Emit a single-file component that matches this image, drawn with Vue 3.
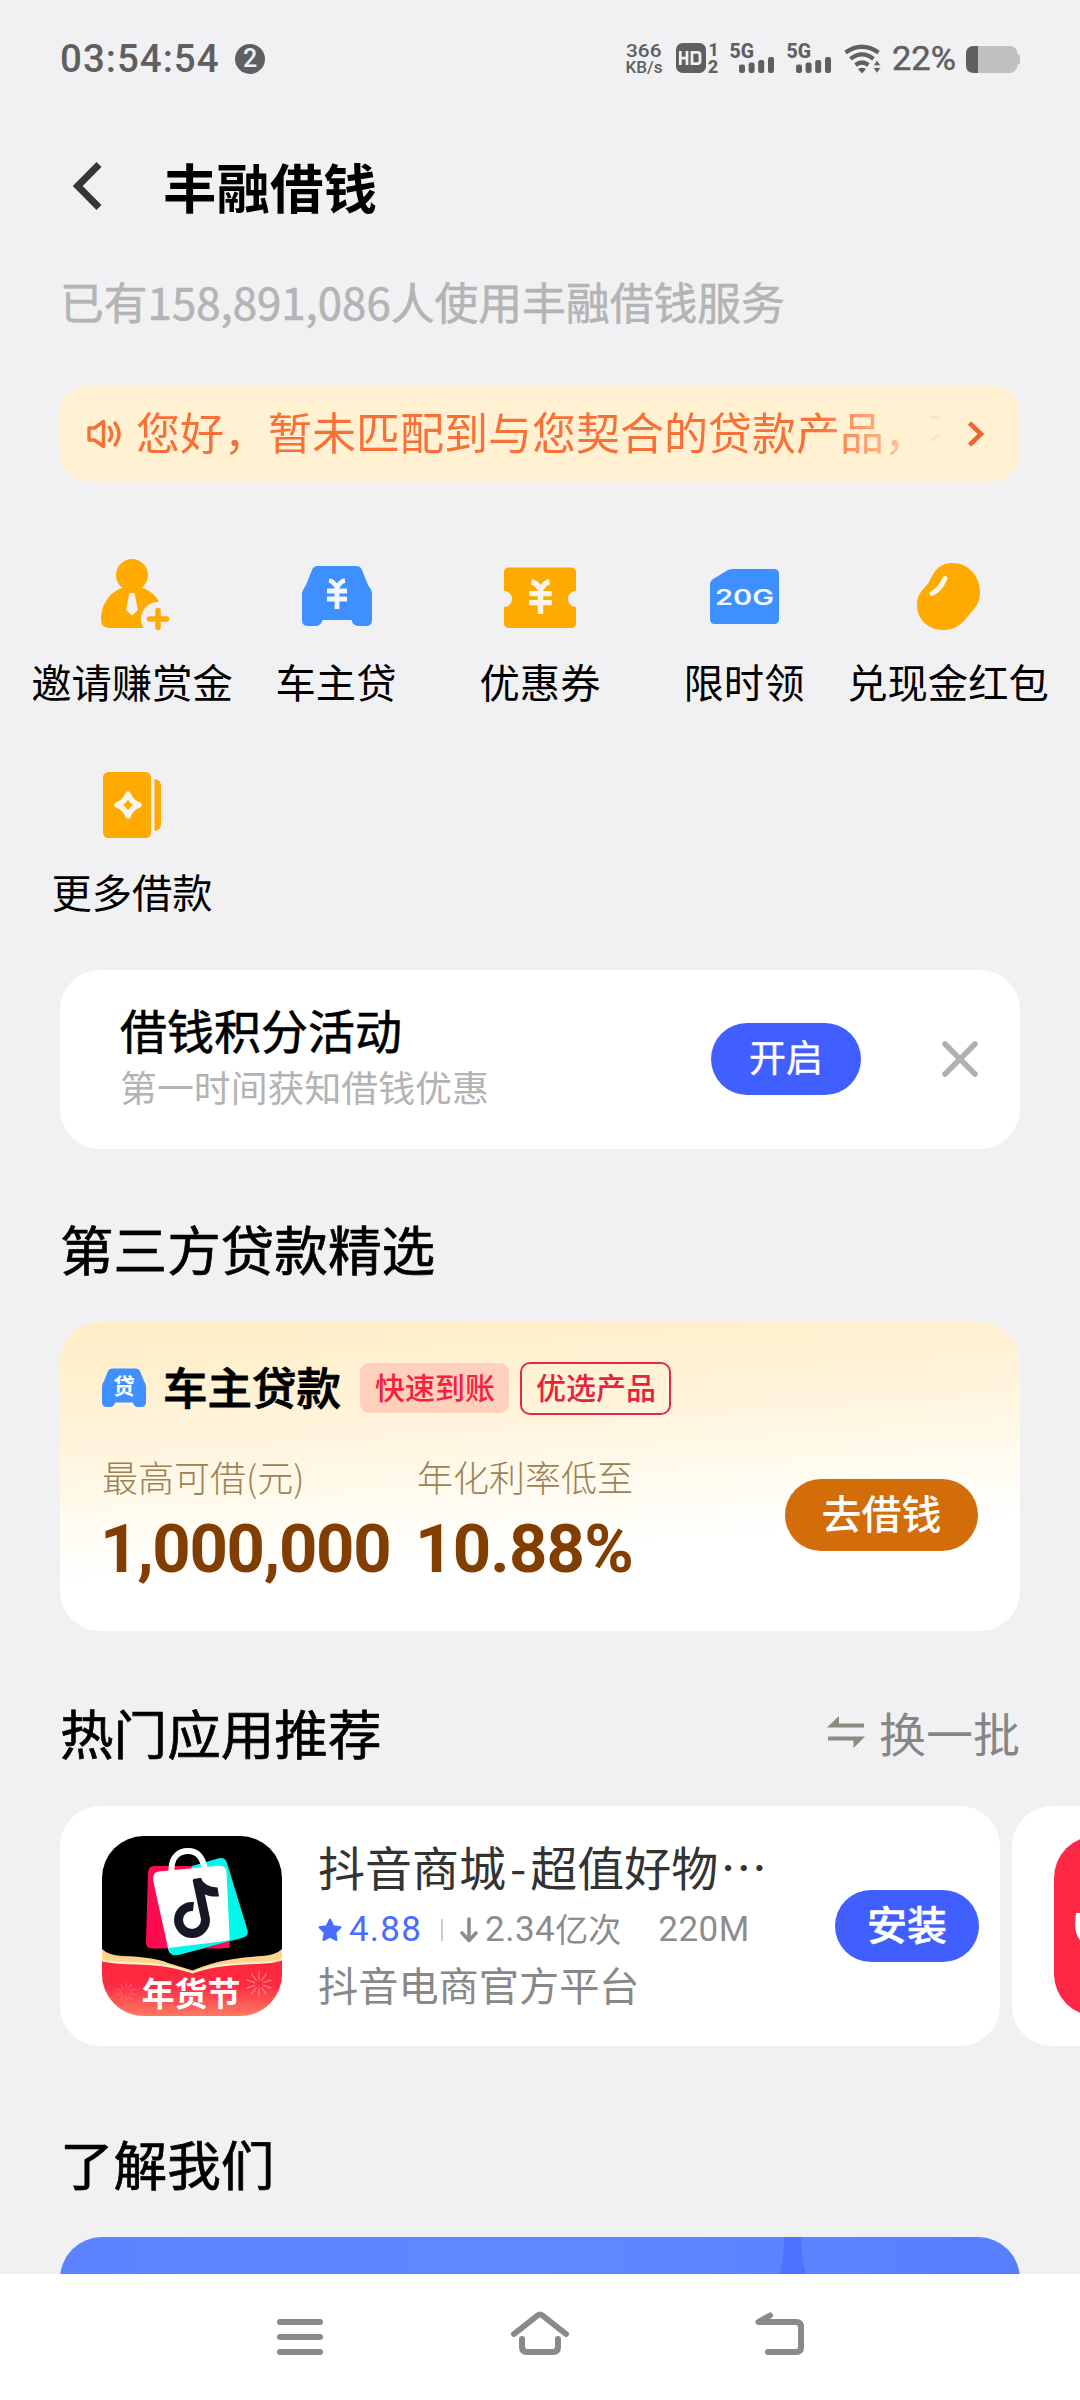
<script setup>
const yen = 'M-8 -13.5 C-5 -13 -2 -10 0 -6.5 C2 -10 5 -13 8 -13.5 M-10 -3 H10 M-10 5 H10 M0 -6 V15'
const shortcuts = [
  { icon: 'invite', label: '邀请赚赏金' },
  { icon: 'car', label: '车主贷' },
  { icon: 'ticket', label: '优惠券' },
  { icon: 'sim', label: '限时领' },
  { icon: 'bean', label: '兑现金红包' },
  { icon: 'book', label: '更多借款' },
]
const signalOffsets = [0, 57]
const rays = [0, 36, 72, 108, 144, 180, 216, 252, 288, 324]
</script>

<template>
  <div class="screen">
    <main class="content">
      <div class="status">
        <span class="time">03:54:54</span>
        <span class="count">2</span>
        <svg class="status-icons" width="396" height="60" viewBox="624 28 396 60" fill="#5f5f61">
          <g font-family="Roboto, sans-serif" font-weight="500">
            <text x="626" y="57.2" font-size="18.5" textLength="35.5" lengthAdjust="spacingAndGlyphs">366</text>
            <text x="625.5" y="73.2" font-size="16.5" textLength="37" lengthAdjust="spacingAndGlyphs">KB/s</text>
          </g>
          <rect x="676" y="43" width="30" height="30" rx="6.5" />
          <g fill="none" stroke="#f1f1f3" stroke-width="2.8">
            <path d="M680.3 51 V65 M687 51 V65 M680 58.2 H687" />
            <path d="M692 52.3 H697.5 Q700 52.3 700 55 V61 Q700 63.7 697.5 63.7 H692 Z" />
          </g>
          <g font-family="Roboto, sans-serif" font-weight="800">
            <text x="708.5" y="55.5" font-size="17.5">1</text>
            <text x="707.8" y="73" font-size="17.5" textLength="10.5" lengthAdjust="spacingAndGlyphs">2</text>
          </g>
          <g v-for="x in signalOffsets" :key="x" :transform="`translate(${x} 0)`">
            <text x="729.5" y="57.8" font-size="20.5" font-family="Roboto, sans-serif" font-weight="800" textLength="24.5" lengthAdjust="spacingAndGlyphs">5G</text>
            <rect x="739" y="64.5" width="6" height="8.5" rx="2.2" />
            <rect x="748.6" y="62.5" width="6" height="10.5" rx="2.2" />
            <rect x="758.2" y="60" width="6" height="13" rx="2.2" />
            <rect x="768" y="57" width="6" height="16" rx="2.2" />
          </g>
          <g fill="none" stroke="#5f5f61" stroke-width="4.2">
            <path d="M845.5 52.5 Q862 41 878.5 52.5" />
            <path d="M850.5 58.8 Q862 50 873.5 58.8" />
            <path d="M855.5 65 Q862 60 868.5 65" />
          </g>
          <path d="M858 69 Q862 66.5 866 69 L862 73.5 Z" />
          <path d="M877 60 L880.8 65.8 H873.2 Z M877 73.5 L880.8 67.5 H873.2 Z" stroke="#f1f1f3" stroke-width=".8" />
          <text x="892" y="70.3" font-size="32.5" font-family="Roboto, sans-serif" font-weight="400" stroke="#5f5f61" stroke-width=".5" textLength="64" lengthAdjust="spacingAndGlyphs">22%</text>
          <rect x="966" y="46" width="51.5" height="27" rx="8" fill="#c0c0c2" />
          <path d="M1017 54 Q1020 54.5 1020 57 V62 Q1020 64.5 1017 65 Z" fill="#c0c0c2" />
          <path d="M978 46 H974 Q966 46 966 54 V65 Q966 73 974 73 H978 Z" />
        </svg>
      </div>

      <header class="titlebar">
        <svg width="32" height="52" viewBox="0 0 32 52" fill="none" stroke="#363636" stroke-width="7" stroke-linejoin="miter">
          <path d="M29 4.5 L7.7 26 L29 47.5" />
        </svg>
        <h1>丰融借钱</h1>
      </header>
      <p class="served">已有158,891,086人使用丰融借钱服务</p>

      <div class="notice">
        <svg width="34" height="34" viewBox="0 0 34 34" fill="none" stroke="#f97036" stroke-width="3.4" stroke-linecap="round" stroke-linejoin="round">
          <path d="M2 11 H7.5 L16.5 4.5 V29.5 L7.5 23 H2 Z" />
          <path d="M22.5 10.5 Q27 17 22.5 23.5 M28 6 Q36 17 28 28" />
        </svg>
        <span class="notice-text">您好，暂未匹配到与您契合的贷款产品，不</span>
        <svg class="chev" width="18" height="28" viewBox="0 0 18 28" fill="none" stroke="#f26430" stroke-width="4.5">
          <path d="M2.5 3 L14 14 L2.5 25" />
        </svg>
      </div>

      <nav class="shortcuts">
        <div v-for="s in shortcuts" :key="s.label" class="shortcut">
          <svg width="80" height="80" viewBox="0 0 80 80">
            <g v-if="s.icon === 'invite'">
              <circle cx="40" cy="20" r="16" fill="#ffaa00" />
              <path d="M9 65 C9 47 20 36 31 32.5 C33 31.8 34 30 33 28 H47 C46 30 47 31.8 49 32.5 C57 35 64 40 67 47 L66 73 H18 Q9 73 9 65 Z" fill="#ffaa00" />
              <path d="M37.5 38 H42.5 L46 55 L40 60.5 L34 55 Z" fill="#f1f1f3" />
              <circle cx="66" cy="64" r="17" fill="#f1f1f3" />
              <path d="M57.5 64 H74.5 M66 55.5 V72.5" stroke="#ffaa00" stroke-width="5.5" stroke-linecap="round" />
            </g>
            <g v-else-if="s.icon === 'car'">
              <path d="M22 11 H60 Q64.5 11 66 15 L72 30 Q76 35 76 39 V65 Q76 71 70 71 H63 Q57 71 55.5 65 H26.5 Q25 71 19 71 H12 Q6 71 6 65 V39 Q6 36 10 30 L16 15 Q17.5 11 22 11 Z" fill="#3e8fff" />
              <path :d="yen" transform="translate(41 39)" fill="none" stroke="#f3f6fc" stroke-width="4.8" />
            </g>
            <g v-else-if="s.icon === 'ticket'">
              <path d="M9 12.5 H71 Q76 12.5 76 17.5 V36 A8 8 0 0 0 76 52 V68 Q76 73 71 73 H9 Q4 73 4 68 V52 A8 8 0 0 0 4 36 V17.5 Q4 12.5 9 12.5 Z" fill="#ffaa00" />
              <path :d="yen" transform="translate(40.5 42) scale(1.13)" fill="none" stroke="#f8f5ee" stroke-width="4.8" />
            </g>
            <g v-else-if="s.icon === 'sim'">
              <path d="M29 14 H70 Q75 14 75 19 V64 Q75 69 70 69 H11 Q6 69 6 64 V29 Q6 26 8.5 24.5 L23 15.5 Q25.5 14 29 14 Z" fill="#3e8fff" />
              <text x="11" y="49.8" font-family="Inter, sans-serif" font-weight="600" font-size="21" textLength="59" lengthAdjust="spacingAndGlyphs" fill="#f3f6fc">20G</text>
            </g>
            <g v-else-if="s.icon === 'bean'">
              <path d="M45 8 C60 8 72 21 72 37 C72 48 67 53 61 60 C54 69 47 75 35 75 C20 75 9 64 9 50 C9 41 13 36 19 30 C23 25 24 19 29 14 C33 10 38 8 45 8 Z" fill="#ffaa00" />
              <path d="M37 23.5 Q32 35 24 38.5" fill="none" stroke="#f8f5ee" stroke-width="5" stroke-linecap="round" />
            </g>
            <g v-else>
              <rect x="11" y="7" width="48" height="66" rx="5.5" fill="#ffaa00" />
              <path d="M62.5 14 Q69 15 69 21 V59 Q69 65 62.5 66 Z" fill="#ffaa00" />
              <path d="M36 29 Q39 37 47 40 Q39 43 36 51 Q33 43 25 40 Q33 37 36 29 Z" fill="none" stroke="#f8f5ee" stroke-width="5.5" stroke-linejoin="round" />
            </g>
          </svg>
          <span>{{ s.label }}</span>
        </div>
      </nav>

      <section class="card points">
        <div class="points-text">
          <strong>借钱积分活动</strong>
          <span>第一时间获知借钱优惠</span>
        </div>
        <button class="pill enable">开启</button>
        <svg width="38" height="38" viewBox="0 0 38 38" stroke="#b0b0b0" stroke-width="5.5" stroke-linecap="round">
          <path d="M4 4 L34 34 M34 4 L4 34" />
        </svg>
      </section>

      <h2 class="h-loan">第三方贷款精选</h2>
      <section class="card loan">
        <div class="loan-head">
          <svg width="44" height="40" viewBox="0 0 44 40">
            <path d="M10 .5 H34 Q37 .5 38 3 L41.5 12 Q44 16 44 19 V34 Q44 39 39 39 H36 Q32 39 31 34.5 H13 Q12 39 8 39 H5 Q0 39 0 34 V19 Q0 16 2.5 12 L6 3 Q7 .5 10 .5 Z" fill="#3e8fff" />
            <text x="22" y="25.5" text-anchor="middle" font-family="Noto Sans CJK SC, sans-serif" font-weight="700" font-size="21.5" fill="#fff">贷</text>
          </svg>
          <strong>车主贷款</strong>
          <span class="tag solid">快速到账</span>
          <span class="tag line">优选产品</span>
        </div>
        <div class="loan-body">
          <div class="stat amount">
            <span>最高可借(元)</span>
            <b>1,000,000</b>
          </div>
          <div class="stat rate">
            <span>年化利率低至</span>
            <b>10.88%</b>
          </div>
          <button class="pill borrow">去借钱</button>
        </div>
      </section>

      <div class="h-apps">
        <h2>热门应用推荐</h2>
        <span class="swap">
          <svg width="38" height="34" viewBox="0 0 38 34" fill="#8a8c82">
            <path d="M0 12.5 L12 1 V8.5 H37 V12.5 Z M1 21.5 H38 L26.5 33 V25.5 H1 Z" />
          </svg>
          换一批
        </span>
      </div>
      <div class="apps">
        <article class="card app">
          <svg class="app-icon" width="180" height="180" viewBox="0 0 180 180">
            <defs>
              <clipPath id="tile"><rect width="180" height="180" rx="42" /></clipPath>
              <linearGradient id="festive" x1="0" y1="0" x2="0" y2="1">
                <stop offset="0" stop-color="#ff2638" />
                <stop offset=".45" stop-color="#fb2b45" />
                <stop offset="1" stop-color="#ff7a62" />
              </linearGradient>
            </defs>
            <g clip-path="url(#tile)">
              <rect width="180" height="180" fill="#000" />
              <path d="M0 113 Q6 119 20 120 Q52 121 66 127 Q80 131 90.5 134.5 Q101 130 116 126 Q130 122 160 120 Q174 119 180 113 V180 H0 Z" fill="#ffd38a" />
              <path d="M0 123 Q10 126 30 126 Q58 127 70 130 Q82 133 90.5 136 Q100 132 113 129.5 Q130 126 155 126 Q172 125.5 180 122 V180 H0 Z" fill="#ffeec8" />
              <path d="M0 125.5 Q14 128.5 34 128.5 Q58 129 70 132 Q82 134.5 90.5 137.5 Q100 134 113 131.5 Q130 128.5 155 128 Q172 127.5 180 124.5 V180 H0 Z" fill="url(#festive)" />
              <g stroke="#ffa092" stroke-width="1.4">
                <path v-for="r in rays" :key="r" d="M0 -4 V-13" :transform="`translate(157 148) rotate(${r})`" opacity=".6" />
                <path v-for="r in rays" :key="'b' + r" d="M0 -4 V-10" :transform="`translate(24 156) rotate(${r})`" opacity=".3" />
              </g>
              <path d="M52 30 H112 L127.7 106 Q127.7 112.5 121 112.5 H50 Q44 112.5 44 106 L46 36 Q46.5 30 52 30 Z" fill="#ff0a50" />
              <path d="M90 30 L116 22.5 Q123 20.5 125 27 L145.5 94 Q147 100 140 102 L76 119 Q67 120 66 112 Z" fill="#00f8e8" />
              <path d="M55 112 H127.7 V102 L70 112 Z" fill="#ff0a50" />
              <path d="M66 112 L127.7 100 V105 L76 119 Q68 121 66 112 Z" fill="#00f8e8" />
              <path d="M57 35.5 L116 29.7 Q124 29 124.5 36 L127.7 104 L68 117 L66 112 L51 44 Q50 37 57 35.5 Z" fill="#fff" />
              <path d="M66 112 L125 104.7 L127.7 104 L76 118.5 Q68 120 66 112 Z" fill="#00f8e8" />
              <path d="M69.5 40 V33 C69.5 21 77 15 86 15 C95 15 101 21 103 34" fill="none" stroke="#fff" stroke-width="6" />
              <path d="M91.5 70.5 A13.5 13.5 0 1 0 103.5 83 L95 43" fill="none" stroke="#161823" stroke-width="9" />
              <path d="M91 43 L98.5 42 Q103 51 115.5 51.5 L117 60.5 Q107 61 102 58 Z" fill="#161823" />
              <text x="89" y="170" text-anchor="middle" font-family="Noto Sans CJK SC, sans-serif" font-weight="700" font-size="33" fill="#fff">年货节</text>
            </g>
          </svg>
          <div class="app-info">
            <div class="app-name">抖音商城<i>-</i>超值好物<em>⋯</em></div>
            <div class="app-meta">
              <svg width="24" height="24" viewBox="0 0 24 24" fill="#4a6cff" stroke="#4a6cff" stroke-width="2" stroke-linejoin="round">
                <path d="M12 1.5 L15.3 8.2 L22.5 9.3 L17.3 14.5 L18.5 22 L12 18.5 L5.5 22 L6.7 14.5 L1.5 9.3 L8.7 8.2 Z" />
              </svg>
              <span class="score">4.88</span>
              <span class="bar"></span>
              <svg width="18" height="26" viewBox="0 0 18 26" fill="none" stroke="#8c8c8c" stroke-width="3.6" stroke-linecap="round" stroke-linejoin="round">
                <path d="M9 2 V23 M2 16 L9 23.5 L16 16" />
              </svg>
              <span class="num">2.34</span><span class="unit">亿次</span>
              <span class="num size">220M</span>
            </div>
            <div class="app-desc">抖音电商官方平台</div>
          </div>
          <button class="pill install">安装</button>
        </article>
        <article class="card app next">
          <svg class="app-icon" width="180" height="180" viewBox="0 0 180 180">
            <rect width="180" height="180" rx="42" fill="#fe2744" />
            <path d="M22 77 H60 V110 H34 Q21 104 21 88 Z" fill="#fff" />
          </svg>
        </article>
      </div>

      <h2 class="h-about">了解我们</h2>
      <section class="about">
        <svg width="28" height="40" viewBox="0 0 28 40">
          <path d="M5.5 0 H22 Q22 22 27.5 38 V40 H0 Q5 20 5.5 0 Z" fill="#4b73ff" />
        </svg>
      </section>
    </main>

    <footer class="sysnav">
      <svg width="52" height="52" viewBox="0 0 52 52">
        <path d="M6 11 H46 M6 26 H46 M6 41 H46" />
      </svg>
      <svg width="64" height="52" viewBox="0 0 64 52">
        <path d="M6 23 L29.5 4.5 Q32 2.5 34.5 4.5 L58 23 M14 28 V36 Q14 41 19 41 H45 Q50 41 50 36 V28" />
      </svg>
      <svg width="52" height="52" viewBox="0 0 52 52">
        <path d="M16 4.5 L4.5 11 H42 Q47 11 47 16 V36 Q47 41 42 41 H14" />
      </svg>
    </footer>
  </div>
</template>

<style>
body {
  margin: 0;
  background: #f1f1f3;
}
</style>

<style scoped>
.screen {
  width: 1080px;
  height: 2400px;
  display: flex;
  flex-direction: column;
  overflow: hidden;
  background: #f1f1f3;
  color: #000;
  font-family: "Noto Sans CJK SC", sans-serif;
}
.screen * {
  box-sizing: border-box;
}
svg {
  display: block;
  flex: none;
}
h1,
h2,
p {
  margin: 0;
  white-space: nowrap;
}
.content {
  height: 2274px;
  flex: none;
  overflow: hidden;
  display: flex;
  flex-direction: column;
}
.content > * {
  flex: none;
}
.status {
  height: 116px;
  display: flex;
  align-items: center;
  padding: 0 60px;
}
.time {
  font: 500 38.5px Roboto, sans-serif;
  letter-spacing: 1px;
  color: #5f5f61;
  width: 175px;
}
.count {
  width: 30px;
  height: 30px;
  margin-top: 1px;
  border-radius: 50%;
  background: #5f5f61;
  color: #f1f1f3;
  font: 500 25px/30px Roboto, sans-serif;
  text-align: center;
}
.status-icons {
  margin-left: auto;
}
.titlebar {
  height: 140px;
  display: flex;
  align-items: center;
  padding-left: 70px;
}
h1 {
  margin-left: 61px;
  font-size: 53.5px;
  line-height: 80px;
  font-weight: 700;
}
.served {
  padding-left: 60px;
  font-size: 43.8px;
  line-height: 90px;
  font-weight: 400;
  color: #b4b4b5;
  -webkit-text-stroke: 0.6px #b4b4b5;
}
.notice {
  margin: 40px 60px 0;
  height: 95px;
  border-radius: 26px;
  background: #fff1d2;
  display: flex;
  align-items: center;
  padding-left: 27px;
}
.notice-text {
  width: 804px;
  margin: -5px 0 0 15px;
  overflow: hidden;
  white-space: nowrap;
  font-size: 44px;
  line-height: 90px;
  color: #f97036;
  -webkit-mask-image: linear-gradient(90deg, #000 680px, transparent 812px);
  mask-image: linear-gradient(90deg, #000 680px, transparent 812px);
}
.chev {
  margin-left: 27px;
}
.shortcuts {
  margin: 74px 30px 0;
  display: grid;
  grid-template-columns: repeat(5, 204px);
  row-gap: 54px;
}
.shortcut {
  display: flex;
  flex-direction: column;
  align-items: center;
  gap: 16px;
}
.shortcut span {
  font-size: 40.3px;
  line-height: 60px;
  white-space: nowrap;
}
.card {
  background: #fff;
  border-radius: 40px;
}
.pill {
  flex: none;
  border: 0;
  padding: 0 0 5px;
  height: 72px;
  border-radius: 36px;
  color: #fff;
  background: #415fff;
  font-family: inherit;
  line-height: 67px;
}
.points {
  margin: 49px 60px 0;
  height: 179px;
  display: flex;
  align-items: center;
  padding: 0 41px 1px 60px;
}
.points-text {
  flex: 1;
  display: flex;
  flex-direction: column;
}
.points-text strong {
  font-size: 47px;
  font-weight: 400;
  -webkit-text-stroke: 0.6px #000;
  line-height: 60px;
  margin-top: -6px;
}
.points-text span {
  font-size: 36.9px;
  line-height: 54px;
  color: #b3b3b3;
}
.enable {
  width: 150px;
  font-size: 37px;
  margin-right: 80px;
  -webkit-text-stroke: 0.4px #fff;
}
h2 {
  font-size: 53.6px;
  line-height: 80px;
  font-weight: 400;
  -webkit-text-stroke: 0.7px #000;
}
.h-loan {
  margin: 59px 60px 0;
}
.loan {
  margin: 34px 60px 0;
  height: 309px;
  padding: 39px 42px 0;
  background: linear-gradient(176deg, #ffedc4 0%, #fff3d9 30%, #fffaec 50%, #fff 70%);
}
.loan-head {
  height: 54px;
  display: flex;
  align-items: center;
}
.loan-head strong {
  margin-left: 17px;
  font-size: 44.5px;
  line-height: 54px;
  font-weight: 500;
  -webkit-text-stroke: 0.8px #000;
  margin-top: -5px;
}
.tag {
  font-size: 30px;
  font-weight: 500;
  white-space: nowrap;
}
.solid {
  margin-left: 19px;
  height: 50px;
  line-height: 46px;
  padding: 0 14px 0 15px;
  border-radius: 9px;
  color: #f4223f;
  background: #ffd1bd;
}
.line {
  margin-left: 11px;
  height: 53px;
  line-height: 45px;
  padding: 0 13px 0 14px;
  border: 2px solid #e12a47;
  border-radius: 10px;
  color: #e4243f;
}
.loan-body {
  display: flex;
  margin-top: 36px;
}
.stat {
  display: flex;
  flex-direction: column;
}
.stat span {
  font-size: 36px;
  line-height: 50px;
  font-weight: 300;
  color: #9c8355;
  white-space: nowrap;
}
.stat b {
  font: 700 67px/70px Roboto, sans-serif;
  margin-top: 13px;
  margin-left: -2px;
  color: #823e00;
}
.amount {
  width: 315px;
}
.amount b {
  letter-spacing: -1.3px;
}
.rate b {
  letter-spacing: -0.8px;
}
.borrow {
  margin: 28px 0 0 auto;
  width: 193px;
  font-size: 40px;
  font-weight: 500;
  background: #d36d0a;
}
.h-apps {
  margin: 61px 60px 0;
  display: flex;
  justify-content: space-between;
}
.swap {
  display: flex;
  align-items: center;
  gap: 14px;
  font-size: 47px;
  line-height: 80px;
  color: #868686;
}
.apps {
  margin: 34px 0 0 60px;
  display: flex;
  gap: 12px;
}
.app {
  flex: none;
  width: 940px;
  height: 240px;
  display: flex;
  padding: 30px 21px 0 42px;
}
.app-info {
  flex: 1;
  margin-left: 36px;
  white-space: nowrap;
}
.app-name {
  font-size: 47px;
  line-height: 62px;
  margin-top: -1px;
  color: #333;
}
.app-name i {
  font-style: normal;
  padding: 0 4px;
}
.app-name em {
  font-style: normal;
  padding-left: 2px;
}
.app-meta {
  height: 62px;
  display: flex;
  align-items: center;
  padding-top: 3px;
  color: #8c8c8c;
}
.score,
.num {
  font: 400 35px/50px Roboto, sans-serif;
}
.score {
  margin-left: 7px;
  width: 75px;
  letter-spacing: 1.2px;
  color: #4a6cff;
}
.bar {
  width: 2px;
  height: 22px;
  margin: 0 17px 0 17px;
  background: #ccc;
}
.app-meta .num {
  margin-left: 7px;
  letter-spacing: 0.5px;
}
.unit {
  font-size: 33px;
  line-height: 50px;
  margin-top: -4px;
}
.app-meta .size {
  margin-left: 37px;
}
.app-desc {
  font-size: 40.2px;
  line-height: 50px;
  color: #888;
}
.install {
  width: 144px;
  margin-top: 54px;
  font-size: 40px;
  font-weight: 500;
  -webkit-text-stroke: 0.5px #fff;
}
.h-about {
  margin: 77px 60px 0;
}
.about {
  margin: 34px 60px 0;
  height: 300px;
  border-radius: 42px;
  background: linear-gradient(90deg, #5b83ff 0%, #5f89ff 50%, #557fff 100%);
}
.about svg {
  margin-left: 719px;
}
.sysnav {
  height: 126px;
  flex: none;
  background: #fff;
  display: flex;
  justify-content: center;
  gap: 182px;
  padding-top: 37px;
}
.sysnav svg {
  fill: none;
  stroke: #8a8a8a;
  stroke-width: 6;
  stroke-linecap: round;
  stroke-linejoin: round;
}
</style>
